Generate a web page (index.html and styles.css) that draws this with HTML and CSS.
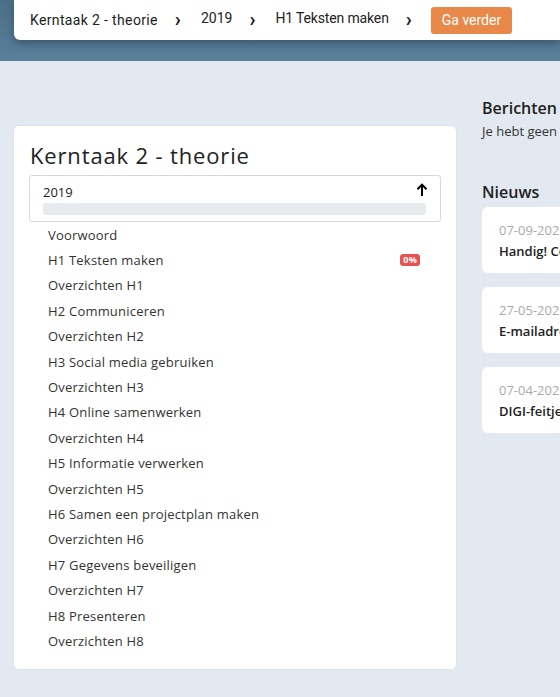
FILE: index.html
```html
<!DOCTYPE html>
<html lang="nl">
<head>
<meta charset="utf-8">
<title>Kerntaak 2 - theorie</title>
<link rel="stylesheet" href="styles.css">
</head>
<body>
<header class="topband">
  <nav class="crumbs">
    <span class="crumb crumb-first">Kerntaak 2 - theorie</span>
    <span class="chev">&#x203A;</span>
    <span class="crumb crumb-up">2019</span>
    <span class="chev">&#x203A;</span>
    <span class="crumb crumb-up crumb-tight">H1 Teksten maken</span>
    <span class="chev">&#x203A;</span>
    <span class="btn">Ga verder</span>
  </nav>
</header>
<main class="content">
  <section class="card">
    <h1 class="card-title">Kerntaak 2 - theorie</h1>
    <div class="select">
      <div class="select-head">
        <span>2019</span>
        <svg class="arrow" width="12" height="14" viewBox="0 0 12 14"><path d="M6 13V2M1.5 6.2L6 1.6l4.5 4.6" fill="none" stroke="#000" stroke-width="2"/></svg>
      </div>
      <div class="select-bar"></div>
    </div>
    <ul class="list">
      <li>Voorwoord</li>
      <li><span>H1 Teksten maken</span><span class="badge">0%</span></li>
      <li>Overzichten H1</li>
      <li>H2 Communiceren</li>
      <li>Overzichten H2</li>
      <li>H3 Social media gebruiken</li>
      <li>Overzichten H3</li>
      <li>H4 Online samenwerken</li>
      <li>Overzichten H4</li>
      <li>H5 Informatie verwerken</li>
      <li>Overzichten H5</li>
      <li>H6 Samen een projectplan maken</li>
      <li>Overzichten H6</li>
      <li>H7 Gegevens beveiligen</li>
      <li>Overzichten H7</li>
      <li>H8 Presenteren</li>
      <li>Overzichten H8</li>
    </ul>
  </section>
  <aside class="side">
    <h2 class="side-title">Berichten</h2>
    <p class="side-text">Je hebt geen nieuwe berichten</p>
    <h2 class="side-title news-title">Nieuws</h2>
    <div class="news">
      <div class="news-date">07-09-2020</div>
      <div class="news-head">Handig! Co</div>
    </div>
    <div class="news">
      <div class="news-date">27-05-2020</div>
      <div class="news-head">E-mailadres</div>
    </div>
    <div class="news">
      <div class="news-date">07-04-2020</div>
      <div class="news-head">DIGI-feitjes</div>
    </div>
  </aside>
</main>
</body>
</html>
```
FILE: styles.css
```css
* { box-sizing: border-box; }
html, body { margin: 0; padding: 0; }
body {
  background: #e3e9f0;
  font-family: "Open Sans", "Noto Sans", sans-serif;
  color: #222;
  overflow: hidden;
  width: 560px;
}
.topband {
  height: 61px;
  background: linear-gradient(180deg, #4c6f88 0%, #5a8099 100%);
  padding-left: 14px;
  display: flex;
  align-items: flex-start;
}
.crumbs {
  flex: 1;
  height: 40px;
  background: #fff;
  border-radius: 0 0 0 6px;
  box-shadow: 0 3px 8px rgba(20, 40, 60, 0.45);
  display: flex;
  align-items: center;
  padding-left: 16px;
  font-family: "Roboto", "Open Sans", sans-serif;
  font-size: 14px;
  color: #222;
  white-space: nowrap;
}
.crumb-first { letter-spacing: 0.35px; }
.crumb-tight { letter-spacing: -0.15px; }
.crumb-up { position: relative; top: -2px; }
.chev {
  font-size: 20px;
  font-weight: 700;
  margin: 0 20px 0 17px;
  line-height: 1;
  position: relative;
  top: -1px;
}
.btn {
  background: #e8894a;
  color: #fff;
  border-radius: 3px;
  height: 27px;
  padding: 0 11px;
  display: flex;
  align-items: center;
  margin-left: -1px;
}
.content {
  display: flex;
  align-items: flex-start;
  padding: 0 0 0 13px;
  gap: 25px;
}
.card {
  flex: 0 0 444px;
  margin-top: 64px;
  background: #fff;
  border: 1px solid #dde3ea;
  border-radius: 6px;
  padding: 16px 15px 15px 15px;
}
.card-title {
  font-size: 22px;
  font-weight: 400;
  margin: 0 0 7px 1px;
  line-height: 26px;
  letter-spacing: 0.85px;
  color: #222;
}
.select {
  border: 1px solid #d6d9dd;
  border-radius: 3px;
  padding: 7px 14px 7px 13px;
  height: 47px;
}
.select-head {
  display: flex;
  justify-content: space-between;
  align-items: center;
  font-size: 13px;
  height: 18px;
}
.arrow { margin-right: -2px; margin-top: -4px; }
.select-bar {
  margin-top: 2px;
  height: 12px;
  background: #e8ebee;
  border-radius: 3px;
}
.list {
  list-style: none;
  margin: 0;
  padding: 0 21px 0 19px;
}
.list li {
  height: 25.4px;
  display: flex;
  align-items: center;
  justify-content: space-between;
  font-size: 13px;
  color: #333;
  letter-spacing: 0.2px;
}
.badge {
  background: #e55353;
  color: #fff;
  font-size: 9px;
  font-weight: 700;
  border-radius: 3px;
  padding: 0 3px;
  line-height: 12px;
}
.side {
  flex: 0 0 300px;
  padding-top: 36px;
}
.side-title {
  font-size: 16px;
  font-weight: 600;
  margin: 0;
  line-height: 22px;
  color: #222;
}
.side-text {
  font-size: 13px;
  margin: 3px 0 0;
  line-height: 18px;
  color: #333;
}
.news-title { margin-top: 41px; margin-bottom: 4px; }
.news {
  background: #fff;
  border-radius: 6px;
  height: 66px;
  padding: 14px 17px;
  margin-bottom: 14px;
}
.news-date { font-size: 13px; color: #aaa; line-height: 18px; }
.news-head { font-size: 13px; font-weight: 600; color: #222; line-height: 18px; margin-top: 3px; }
```
